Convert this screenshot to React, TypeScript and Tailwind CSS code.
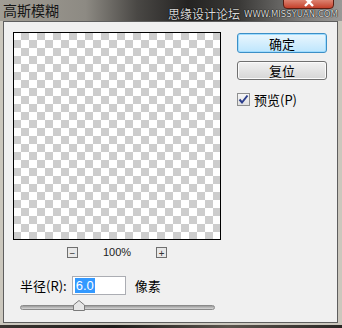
import React from "react";

const cjk = "font-['Noto_Sans_CJK_SC','Noto_Sans',sans-serif]";

function ZoomBox({ sign }: { sign: string }) {
  return (
    <div className="flex h-[11px] w-[11px] items-center justify-center border border-[#6f6f6f] bg-[#e8e8e8] text-[10px] leading-none text-[#333]">
      {sign}
    </div>
  );
}

function DialogButton({ label, primary }: { label: string; primary?: boolean }) {
  return (
    <button
      className={
        primary
          ? `flex h-[20px] w-[90px] items-center justify-center rounded-[3px] border border-[#3c8fc6] bg-[linear-gradient(#eaf6fd,#bee6fd)] text-[13px] leading-none text-black shadow-[inset_0_0_0_1px_#9fdcff] ${cjk}`
          : `flex h-[19px] w-[90px] items-center justify-center rounded-[3px] border border-[#707070] bg-[linear-gradient(#f2f2f2,#d6d6d6)] text-[13px] leading-none text-black shadow-[inset_0_0_0_1px_#fbfbfb] ${cjk}`
      }
    >
      {label}
    </button>
  );
}

export default function App() {
  return (
    <div className="flex h-[328px] w-[342px] flex-col overflow-hidden bg-[#2d2b29]">
      {/* title bar */}
      <div className="relative z-10 h-[21px] shrink-0 bg-[linear-gradient(90deg,#a19d94_0%,#8d8a83_25%,#4a4845_40%,#242322_55%,#3a3937_70%,#7c7b79_88%,#9a9997_100%)]">
        <span className={`absolute left-[3px] top-[0px] whitespace-nowrap text-[14px] leading-[20px] text-[#151515] ${cjk}`}>
          高斯模糊
        </span>
        <div className="absolute left-[283px] top-[-2px] flex h-[11px] w-[51px] items-end justify-center rounded-b-[4px] border border-[#5a1d12] bg-[linear-gradient(#e08b79,#c4412c)]">
          <svg width="12" height="7" viewBox="0 0 12 7" className="mb-[1px]">
            <path d="M2 -2 L10 6 M10 -2 L2 6" stroke="#fff" strokeWidth="2.4" />
          </svg>
        </div>
        <div className="absolute left-[168px] top-[8px] flex items-center gap-[4px] whitespace-nowrap [text-shadow:0_0_1px_#000,0_0_1px_#000]">
          <span className={`text-[12px] leading-[12px] text-[#d9d9d9] ${cjk}`}>思缘设计论坛</span>
          <span className="font-['DejaVu_Sans',sans-serif] text-[8.5px] leading-[10px] text-[#d9d9d9]">
            WWW.MISSYUAN.COM
          </span>
        </div>
      </div>

      {/* frame */}
      <div className="flex h-[304px] shrink-0 bg-[#cbc7bd] pl-[3px] pr-[4px] pb-[2px]">
        <div className="flex flex-1 border border-[#5e5e5e] bg-[#f0f0f0] pl-[9px] pt-[10px]">
          <div className="flex w-[208px] flex-col">
            <div className="h-[208px] w-[208px] border border-black bg-[repeating-conic-gradient(#cdcdcd_0_25%,#ffffff_0_50%)] bg-[length:16px_16px] bg-[position:-1px_-1px]" />
            <div className="mt-[7px] flex items-center justify-center">
              <ZoomBox sign="−" />
              <span className="mx-[25px] font-['Liberation_Sans',sans-serif] text-[11px] leading-none text-[#222]">100%</span>
              <ZoomBox sign="+" />
            </div>
            <div className="mt-[18px] flex items-center pl-[7px]">
              <span className={`text-[13px] leading-none text-black ${cjk}`}>半径(R):</span>
              <div className="ml-[5px] flex h-[19px] w-[54px] items-center border border-[#abadb3] bg-white pl-[2px]">
                <span className="bg-[#3399ff] px-[1px] font-['Liberation_Sans',sans-serif] text-[13px] leading-[15px] text-white">
                  6.0
                </span>
              </div>
              <span className={`ml-[9px] text-[13px] leading-none text-black ${cjk}`}>像素</span>
            </div>
            <div className="relative mt-[10px] ml-[7px] h-[5px] w-[195px] rounded-full border border-[#8a8a8a] bg-[linear-gradient(#9a9a9a,#d8d8d8)]">
              <svg
                className="absolute left-[52px] top-[-6px]"
                width="12"
                height="11"
                viewBox="0 0 12 11"
              >
                <path d="M6 0.5 L11.5 5 V10.5 H0.5 V5 Z" fill="#e6e6e6" stroke="#7a7a7a" />
              </svg>
            </div>
          </div>

          <div className="ml-[16px] flex flex-col pt-[1px]">
            <DialogButton label="确定" primary />
            <div className="mt-[8px]">
              <DialogButton label="复位" />
            </div>
            <div className="mt-[13px] flex items-center">
              <div className="flex h-[13px] w-[13px] items-center justify-center border border-[#8e8f8f] bg-[linear-gradient(#f6f6f6,#e0e0e0)]">
                <svg width="11" height="11" viewBox="0 0 11 11">
                  <path d="M1.5 5.5 L4 8.5 L9.5 1.5" fill="none" stroke="#2c3e8c" strokeWidth="2" />
                </svg>
              </div>
              <span className={`ml-[4px] text-[13px] leading-none text-black ${cjk}`}>预览(P)</span>
            </div>
          </div>
        </div>
      </div>
      <div className="flex-1 bg-[linear-gradient(90deg,#3a3531,#1e1c1a,#5a534c,#2a2725)]" />
    </div>
  );
}
